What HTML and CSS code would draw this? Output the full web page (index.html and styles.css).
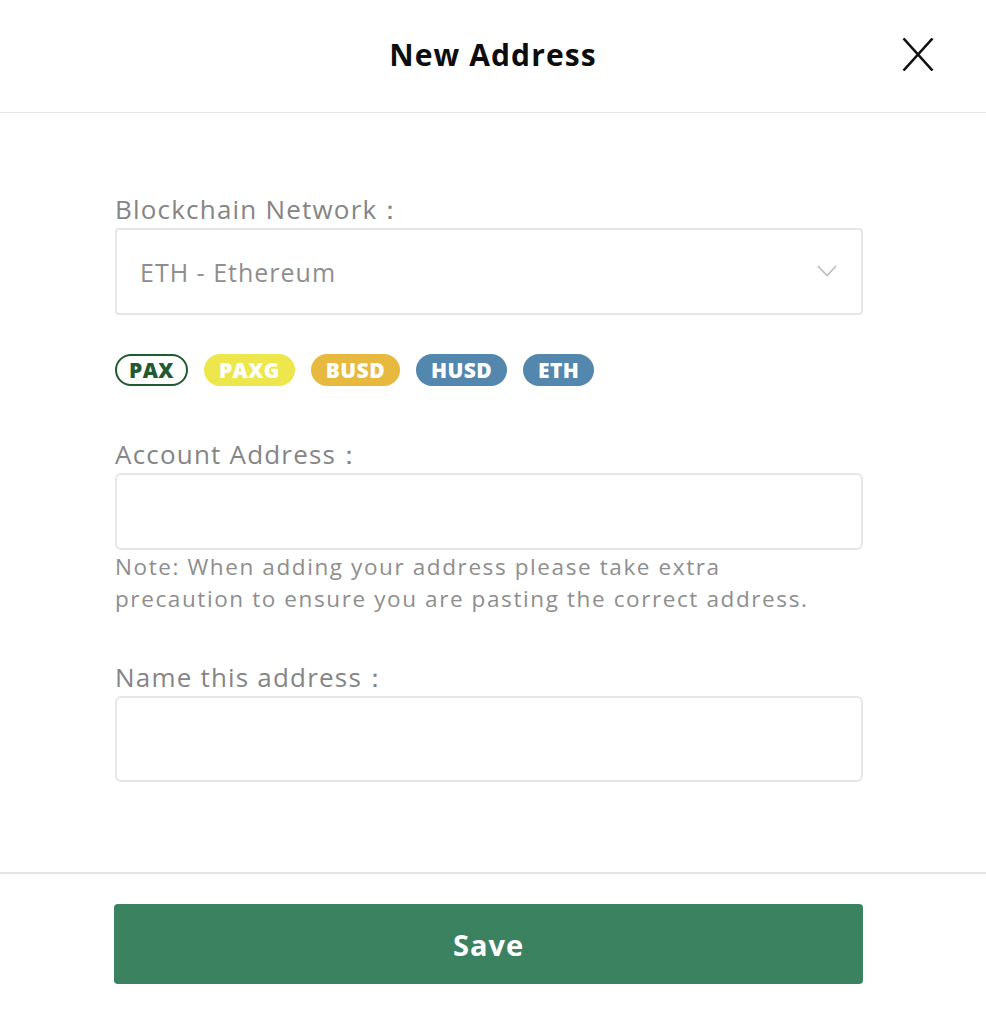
FILE: index.html
```html
<!DOCTYPE html>
<html>
<head>
<meta charset="utf-8">
<link rel="stylesheet" href="styles.css">
</head>
<body>
<div class="modal">
  <header class="head">
    <h1 class="title">New Address</h1>
    <button class="close" aria-label="Close">
      <svg width="32" height="33" viewBox="0 0 32 33"><path d="M1.5 0.5 L30.5 32.5 M30.5 0.5 L1.5 32.5" stroke="#111" stroke-width="2.6" fill="none"/></svg>
    </button>
  </header>
  <main class="body">
    <div class="field">
      <label class="label">Blockchain Network<span class="colon">：</span></label>
      <div class="select">
        <span class="select-value">ETH - Ethereum</span>
        <svg class="chev" width="20" height="12" viewBox="0 0 20 12"><path d="M1 1 L10 10.5 L19 1" stroke="#bdbdbd" stroke-width="1.6" fill="none"/></svg>
      </div>
    </div>
    <div class="tags">
      <span class="tag tag-pax">PAX</span>
      <span class="tag tag-paxg">PAXG</span>
      <span class="tag tag-busd">BUSD</span>
      <span class="tag tag-husd">HUSD</span>
      <span class="tag tag-eth">ETH</span>
    </div>
    <div class="field field-account">
      <label class="label">Account Address<span class="colon">：</span></label>
      <div class="input input-account"></div>
      <p class="note">Note: When adding your address please take extra<br>precaution to ensure you are pasting the correct address.</p>
    </div>
    <div class="field field-name">
      <label class="label">Name this address<span class="colon">：</span></label>
      <div class="input input-name"></div>
    </div>
  </main>
  <footer class="foot">
    <button class="save">Save</button>
  </footer>
</div>
</body>
</html>
```
FILE: styles.css
```css
* { box-sizing: border-box; }
html, body { margin: 0; padding: 0; background: #fff; }
body { font-family: "Open Sans", "Lato", sans-serif; color: #111; }
.modal { width: 986px; height: 1014px; display: flex; flex-direction: column; }
.head { height: 113px; border-bottom: 1px solid #e6e6e6; display: flex; align-items: center; justify-content: center; position: relative; padding-bottom: 4px; }
.title { margin: 0; font-size: 30px; font-weight: 700; color: #0d0d0d; letter-spacing: 1.1px; }
.close { position: absolute; right: 52px; top: 38px; background: none; border: 0; padding: 0; width: 32px; height: 33px; }
.close svg { display: block; }
.body { flex: 1; padding: 80px 123px 0 115px; }
.field { display: flex; flex-direction: column; }
.label { font-size: 26px; color: #858585; line-height: 32px; height: 35px; letter-spacing: 1.2px; }
.colon { letter-spacing: 0; }
.select { height: 87px; border: 2px solid #e6e6e6; border-radius: 4px; display: flex; align-items: center; justify-content: space-between; padding: 0 24px 0 23px; }
.select-value { font-size: 25px; color: #8e8e8e; letter-spacing: 1px; }
.chev { margin-top: -2px; }
.tags { display: flex; gap: 16px; margin-top: 39px; }
.tag { height: 32px; border-radius: 16px; padding: 0 15px; font-size: 21px; font-weight: 800; color: #fff; display: inline-flex; align-items: center; letter-spacing: 0.4px; }
.tag-pax { border: 2px solid #1f5a30; color: #1f5a30; padding: 0 12px; }
.tag-paxg { background: #ede74d; }
.tag-busd { background: #e8b93f; }
.tag-husd { background: #5387ae; }
.tag-eth { background: #5387ae; }
.field-account { margin-top: 52px; }
.input { border: 2px solid #e6e6e6; border-radius: 6px; }
.input-account { height: 77px; }
.note { margin: 1px 0 0; font-size: 22.5px; line-height: 32px; color: #8e8e8e; letter-spacing: 1.6px; }
.field-name { margin-top: 46px; }
.input-name { height: 86px; }
.foot { height: 142px; border-top: 2px solid #e4e4e4; padding: 30px 123px 0 114px; }
.save { width: 100%; height: 80px; background: #3a8260; border: 0; border-radius: 4px; color: #fff; font-family: "Open Sans", sans-serif; font-size: 29px; font-weight: 700; letter-spacing: 1px; }
```
